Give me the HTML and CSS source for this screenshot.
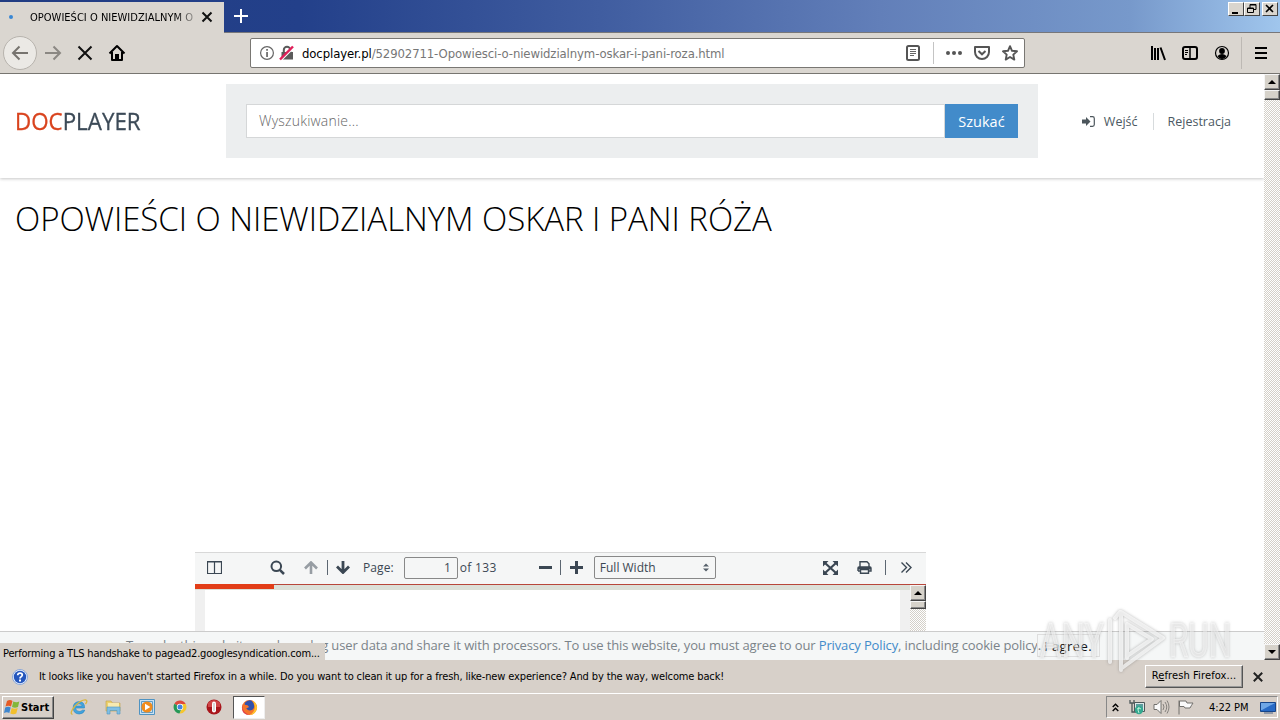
FILE: index.html
```
<!DOCTYPE html>
<html lang="pl">
<head>
<meta charset="utf-8">
<title>OPOWIEŚCI O NIEWIDZIALNYM OSKAR I PANI RÓŻA</title>
<link rel="stylesheet" href="styles.css">
</head>
<body>
<div class="titlebar">
  <div class="tab">
    <span class="tab-dot"></span>
    <span class="tab-title">OPOWIEŚCI O NIEWIDZIALNYM O</span>
    <svg class="tab-close" width="12" height="12" viewBox="0 0 12 12"><path d="M1.5 1.5l9 9M10.5 1.5l-9 9" stroke="#111" stroke-width="2"/></svg>
  </div>
  <svg class="new-tab" width="14" height="14" viewBox="0 0 14 14"><path d="M7 0v14M0 7h14" stroke="#fff" stroke-width="2"/></svg>
  <div class="window-buttons">
    <span class="win-btn"><svg width="14" height="12" viewBox="0 0 14 12"><path d="M3 9h6v2H3z"/></svg></span>
    <span class="win-btn"><svg width="14" height="12" viewBox="0 0 14 12"><path d="M5 5V1.500h6V6.500H9M5 2h6M2.500 5h6v4.500h-6zM2.500 5.500h6" fill="none" stroke="#000"/></svg></span>
    <span class="win-btn win-close"><svg width="14" height="12" viewBox="0 0 14 12"><path d="M3 2l7 7M10 2L3 9" stroke="#000" stroke-width="1.600"/></svg></span>
  </div>
</div>
<div class="navbar">
  <span class="back"><svg width="18" height="16" viewBox="0 0 18 16"><path d="M17 8H2M8.500 1.500L2 8l6.500 6.500" fill="none" stroke="#77746f" stroke-width="2"/></svg></span>
  <svg class="forward" width="18" height="16" viewBox="0 0 18 16"><path d="M1 8h15M9.500 1.500L16 8l-6.500 6.500" fill="none" stroke="#8b8883" stroke-width="2"/></svg>
  <svg class="stop" width="16" height="16" viewBox="0 0 16 16"><path d="M1.500 1.500l13 13M14.500 1.500l-13 13" stroke="#111" stroke-width="2"/></svg>
  <svg class="home" width="18" height="18" viewBox="0 0 18 18"><path d="M1.500 9.500L9 2l7.500 7.500M4 8v8h10V8" fill="none" stroke="#000" stroke-width="2" stroke-linejoin="round"/><path d="M7 10h4v6H7z"/></svg>
  <div class="urlbar">
    <svg width="16" height="16" viewBox="0 0 16 16"><circle cx="8" cy="8" r="6.400" fill="none" stroke="#666" stroke-width="1.200"/><path d="M7.200 4h1.700v1.700H7.200zM7.200 7h1.700v5H7.200z" fill="#666"/></svg>
    <svg class="lock" width="16" height="16" viewBox="0 0 16 16"><path d="M4.800 8V5a3.200 3.200 0 0 1 6.400 0v3" fill="none" stroke="#5b5b5b" stroke-width="2"/><path d="M2.500 7h11.500v7.500H2.500z" fill="#5b5b5b"/><path d="M2 15.500L15 2.500" stroke="#fff" stroke-width="1.500"/><path d="M1 14.500L14 1.500" stroke="#e0205a" stroke-width="2.400"/></svg>
    <span class="url"><b>docplayer.pl</b>/52902711-Opowiesci-o-niewidzialnym-oskar-i-pani-roza.html</span>
    <svg class="reader" width="14" height="16" viewBox="0 0 14 16"><rect x="1" y="1" width="12" height="14" rx="1.500" fill="none" stroke="#555" stroke-width="2"/><path d="M4 4.500h6M4 6.500h6M4 8.500h6M4 10.500h4" stroke="#666"/></svg>
    <span class="url-separator"></span>
    <svg class="dots" width="18" height="6" viewBox="0 0 18 6" fill="#555"><circle cx="3" cy="3" r="2"/><circle cx="9" cy="3" r="2"/><circle cx="15" cy="3" r="2"/></svg>
    <svg class="pocket" width="16" height="14" viewBox="0 0 16 14"><path d="M1 1h14v5a7 7 0 0 1-14 0z" fill="none" stroke="#555" stroke-width="2" stroke-linejoin="round"/><path d="M4.500 5L8 8.300 11.500 5" fill="none" stroke="#555" stroke-width="2"/></svg>
    <svg class="star" width="16" height="16" viewBox="0 0 16 16"><path d="M8 1.200l2 4.600 5 .5-3.700 3.300 1 5L8 12l-4.300 2.600 1-5L1 6.300l5-.5z" fill="none" stroke="#555" stroke-width="1.900" stroke-linejoin="round"/></svg>
  </div>
  <svg class="library" width="16" height="16" viewBox="0 0 16 16"><path d="M2 1v14M5 3v12M8 3v12M10.500 2.500L15 15" stroke="#000" stroke-width="2" fill="none"/></svg>
  <svg class="sidebar-icon" width="16" height="14" viewBox="0 0 16 14"><rect x="1" y="1" width="14" height="12" rx="2" fill="none" stroke="#000" stroke-width="2"/><path d="M8 1v12" stroke="#000" stroke-width="1.500"/><path d="M3 4.500h3M3 6.500h3M3 8.500h2" stroke="#000"/></svg>
  <svg class="account" width="16" height="16" viewBox="0 0 16 16"><circle cx="8" cy="8" r="6.500" fill="none" stroke="#000" stroke-width="1.200"/><circle cx="8" cy="6" r="2.900"/><path d="M3.500 11q4.500-4 9 0-1.500 3-4.500 3t-4.500-3"/></svg>
  <span class="nav-separator"></span>
  <svg class="menu" width="12" height="12" viewBox="0 0 12 12"><path d="M0 1h12M0 6h12M0 11h12" stroke="#000" stroke-width="2"/></svg>
</div>
<div class="content">
  <div class="page">
    <header class="header">
      <div class="logo"><span class="logo-doc">DOC</span>PLAYER</div>
      <div class="search">
        <div class="search-input">Wyszukiwanie...</div>
        <div class="search-button">Szukać</div>
      </div>
      <nav class="account-links">
        <svg width="13" height="11" viewBox="0 0 13 11"><path d="M0 3.500h4V1l4.500 4.500L4 10V7.500H0z" fill="#4c565c"/><path d="M8 .7h2.500q1.800 0 1.800 1.800v6q0 1.800-1.800 1.800H8" fill="none" stroke="#4c565c" stroke-width="1.200"/></svg>
        <span class="login">Wejść</span>
        <span class="register">Rejestracja</span>
      </nav>
    </header>
    <h1 class="title">OPOWIEŚCI O NIEWIDZIALNYM OSKAR I PANI RÓŻA</h1>
    <div class="viewer">
      <div class="toolbar">
        <svg class="t-sidebar" width="15" height="13" viewBox="0 0 15 13"><path d="M.5.5h14v12H.5zM7.500 1v12M0 1h15" fill="none" stroke="#3b4753" stroke-width="1.200"/></svg>
        <svg class="t-search" width="15" height="15" viewBox="0 0 15 15"><circle cx="6.300" cy="6.300" r="4.800" fill="none" stroke="#3b4753" stroke-width="2"/><path d="M9.800 9.800l4.200 4.200" stroke="#3b4753" stroke-width="2.500"/></svg>
        <svg class="t-up" width="14" height="13" viewBox="0 0 14 13"><path d="M7 13V2M1 7.500L7 1.500l6 6" fill="none" stroke="#979da3" stroke-width="2.600"/></svg>
        <span class="t-line"></span>
        <svg class="t-down" width="14" height="13" viewBox="0 0 14 13"><path d="M7 0v11M1 5.500l6 6 6-6" fill="none" stroke="#3b4753" stroke-width="2.800"/></svg>
        <span class="t-label">Page:</span>
        <span class="page-number">1</span>
        <span class="t-total">of 133</span>
        <svg class="t-minus" width="13" height="3"><path d="M0 0h13v3H0z" fill="#3b4753"/></svg>
        <span class="t-line t-line-zoom"></span>
        <svg class="t-plus" width="13" height="13" viewBox="0 0 13 13"><path d="M6.500 0v13M0 6.500h13" stroke="#3b4753" stroke-width="3"/></svg>
        <span class="zoom-select"><span>Full Width</span><svg width="6" height="9" viewBox="0 0 6 9"><path d="M0 3.500L3 .5l3 3zM0 5.500l3 3 3-3z" fill="#56606a"/></svg></span>
        <svg class="t-full" width="15" height="14" viewBox="0 0 15 14"><path d="M2 2l11 10M13 2L2 12" stroke="#3b4753" stroke-width="2.200"/><path d="M0 0h5.500L0 5.500zM15 0H9.500L15 5.500zM0 14h5.500L0 8.500zM15 14H9.500L15 8.500z" fill="#3b4753"/></svg>
        <svg class="t-print" width="15" height="13" viewBox="0 0 15 13"><path d="M3 6V.7h7l2 2V6M1 10V7q0-1 1-1h11q1 0 1 1v3h-2M1 10h2M3.500 8.500h8v3.800h-8z" fill="none" stroke="#3b4753" stroke-width="1.400"/><path d="M1 6h13v2.500H1z" fill="#3b4753"/></svg>
        <span class="t-line t-line-print"></span>
        <svg class="t-more" width="11" height="11" viewBox="0 0 11 11"><path d="M.5.5l5 5-5 5M5 .5l5 5-5 5" fill="none" stroke="#3b4753" stroke-width="1.400"/></svg>
      </div>
      <div class="progress"><div class="progress-fill"></div></div>
      <div class="document">
        <div class="sheet"></div>
        <div class="scrollbar doc-scrollbar"><span class="scroll-box scroll-up"></span><span class="scroll-box scroll-thumb"></span></div>
      </div>
    </div>
    <div class="cookie-bar">
      <span class="cookie-text">To make this website work, we log user data and share it with processors. To use this website, you must agree to our <a class="policy">Privacy Policy</a>, including cookie policy.</span>
      <span class="agree">I agree.</span>
    </div>
    <div class="status">Performing a TLS handshake to pagead2.googlesyndication.com...</div>
  </div>
  <div class="scrollbar page-scrollbar"><span class="scroll-box scroll-up"></span><span class="scroll-box scroll-thumb"></span><span class="scroll-box scroll-down"></span></div>
</div>
<div class="notification">
  <svg class="help" width="16" height="16" viewBox="0 0 16 16"><circle cx="8" cy="8" r="7.500" fill="#e6efff" stroke="#8ba7d6"/><circle cx="8" cy="8" r="6.200" fill="#2456bd"/><path d="M5.700 6.300q.1-2.200 2.300-2.200 2.300 0 2.300 1.900 0 1-1.200 1.700Q8 8.300 8 9.500" fill="none" stroke="#fff" stroke-width="1.700"/><path d="M7 10.600h2v1.800H7z" fill="#fff"/></svg>
  <span class="note-text">It looks like you haven't started Firefox in a while. Do you want to clean it up for a fresh, like-new experience? And by the way, welcome back!</span>
  <span class="refresh">R<u>e</u>fresh Firefox...</span>
  <svg class="note-close" width="10" height="10" viewBox="0 0 10 10"><path d="M.8.8l8.400 8.400M9.200.8L.8 9.200" stroke="#222" stroke-width="2"/></svg>
</div>
<div class="taskbar">
  <div class="start"><svg width="17" height="16" viewBox="0 0 17 16"><path d="M3 2q3-2 5.500 0L7 7.500Q4.500 6 1.500 7.500z" fill="#e65b25"/><path d="M9.300 2.500q3 1.600 6 0L14 8q-3 1.600-6 0z" fill="#83b738"/><path d="M1.200 8.500q3-1.500 5.500 0L5.300 14Q3 12.500 0 14z" fill="#3f86ce"/><path d="M7.700 9q3 1.600 6 0L12.300 14.500q-3 1.500-6 0z" fill="#f2bf2c"/></svg>Start</div>
  <div class="quick">
    <svg width="18" height="18" viewBox="0 0 18 18"><path d="M14.500 10H5.500q.5 3.500 3.800 3.500 2 0 3-1.300h2.500Q13.500 16 9.200 16q-6-.3-6-6.200T9.300 3.600q5.500.2 5.200 6.400M5.700 8h6.500Q11.700 5.800 9 5.800T5.700 8" fill="#41a4de" stroke="#2183c3" stroke-width=".6"/><path d="M2.500 16.500Q-1 15.500 5 8q7-7 11-6 2 .8-.5 4" fill="none" stroke="#d9b63f" stroke-width="1.300"/></svg>
    <svg width="18" height="18" viewBox="0 0 18 18"><path d="M2 3h5l1.500 2H16v8H2z" fill="#ecd06d" stroke="#c4a348" stroke-width=".6"/><path d="M4 5h11v4H4z" fill="#f7eab0"/><path d="M3 9h13v7h-3v-3.500H6V16H3z" fill="#80bfe4" stroke="#4d94bf" stroke-width=".6"/></svg>
    <svg width="18" height="18" viewBox="0 0 18 18"><path d="M1.500 1.500h15v15h-15z" fill="#c9e1f3" stroke="#4f93c2"/><path d="M3.500 3.500h11v11h-11z" fill="none" stroke="#5e9cc7"/><circle cx="9" cy="9" r="5.600" fill="#f18c1d"/><path d="M7 5.800L12.300 9 7 12.200z" fill="#fff"/></svg>
    <svg width="18" height="18" viewBox="0 0 18 18"><path d="M9 9L3.400 5.800A6.500 6.500 0 0 1 14.700 6z" fill="#df493c"/><path d="M3.400 5.800A6.500 6.500 0 0 0 8.500 15.500L10.500 11 9 9z" fill="#269857"/><path d="M14.700 6A6.500 6.500 0 0 1 8.500 15.500L11.500 10 9 6z" fill="#f5c62c"/><circle cx="9" cy="9" r="3.200" fill="#fff"/><circle cx="9" cy="9" r="2.500" fill="#4284df"/></svg>
    <svg width="18" height="18" viewBox="0 0 18 18"><circle cx="9" cy="9" r="7.500" fill="#a9151b"/><path d="M3 5q6-6 12 0v4H3z" fill="#cf4546"/><rect x="7" y="3.500" width="4" height="11" rx="2" fill="#fff"/><path d="M8.500 5h1v8h-1z" fill="#b6b0b0"/></svg>
  </div>
  <div class="task-active"><svg width="17" height="17" viewBox="0 0 18 18"><circle cx="9" cy="9" r="8" fill="#f4742b"/><path d="M12 1.500q5 3 5 7.500a8 8 0 0 1-8 8q5-3 5.500-7T12 1.500" fill="#ffc52e"/><path d="M1.500 5Q.5 14 9 17 1 17 1 9z" fill="#df3e48"/><path d="M4 4q3-3.500 7-2.500 3 2.500 3 6T10.500 12q-3 .5-5-2l3-1.500-1.500-2-3-.5z" fill="#3051ac"/></svg></div>
  <div class="tray">
    <svg class="chevrons" width="7" height="9" viewBox="0 0 7 9"><path d="M.7 4L3.500 1.200 6.300 4M.7 8l2.800-2.800L6.300 8" fill="none" stroke="#000" stroke-width="1.400"/></svg>
    <svg class="net" width="17" height="16" viewBox="0 0 17 16"><path d="M5.500 3.500h10v9h-10z" fill="#dce8e8" stroke="#4d5759"/><path d="M7 5h7v6H7z" fill="#5b9c9d"/><path d="M1 1v3h4V1M3 4v9h5" fill="none" stroke="#4d5759" stroke-width="1.300"/><circle cx="10" cy="11" r="4.200" fill="#35a990"/><path d="M8 10q2-2 4 0M10 8q-2 3 0 6" fill="none" stroke="#b9eed8"/></svg>
    <svg class="sound" width="17" height="16" viewBox="0 0 17 16"><path d="M1 5.500h3l4-4v13l-4-4H1z" fill="#fafafa" stroke="#72706d"/><path d="M10 5q2 3 0 6M12 3q3.500 5 0 10M14 1.500q4 6.500 0 13" fill="none" stroke="#85827e"/></svg>
    <svg class="flag" width="17" height="16" viewBox="0 0 17 16"><path d="M2 1.500v14M2.500 2H9l1 2h6q-2 3-3 5H8L7 7.500H2.500z" fill="#fafafa" stroke="#72706d"/></svg>
    <span class="clock">4:22 PM</span>
    <svg class="desktop" width="16" height="13" viewBox="0 0 16 13"><path d="M.5 1.500h15v9H.5z" fill="#286ac5" stroke="#174589"/><path d="M1 2h14L2 9H1z" fill="#6fa7e6"/><path d="M4 12h9" stroke="#4a6387"/></svg>
  </div>
</div>
<svg class="watermark" width="200" height="70" viewBox="0 0 200 70">
  <g class="mark">
    <text x="4" y="51" textLength="64" lengthAdjust="spacingAndGlyphs">ANY</text>
    <text x="133" y="51" textLength="62" lengthAdjust="spacingAndGlyphs">RUN</text>
    <path d="M74 14v42M85 64V6l42 26-41 30M79 12l5-6M91 52V18l25 15-25 17"/>
  </g>
</svg>
</body>
</html>
```
FILE: styles.css
```
* { box-sizing: border-box; }
body { margin: 0; width: 1280px; height: 720px; overflow: hidden; display: flex; flex-direction: column; position: relative; background: #fff; font-family: "DejaVu Sans Condensed", "DejaVu Sans", sans-serif; font-stretch: condensed; font-size: 11px; color: #000; white-space: nowrap; }
svg { display: block; flex: none; }

.titlebar { height: 33px; flex: none; display: flex; background: linear-gradient(90deg, #213c82 0, #23408a 300px, #405da0 600px, #627fb9 880px, #7799cb 1130px, #a0c6ed 1280px); border-bottom: 1px solid #77777a; }
.tab { width: 224px; height: 31px; margin-top: 2px; background: #dad6d0; display: flex; align-items: center; padding-bottom: 1px; }
.tab-dot { width: 4px; height: 4px; margin-left: 9px; border-radius: 50%; background: #3987d4; }
.tab-title { width: 166px; margin-left: 17px; letter-spacing: .02px; -webkit-mask-image: linear-gradient(90deg, #000 145px, transparent 172px); mask-image: linear-gradient(90deg, #000 145px, transparent 172px); }
.tab-close { margin-left: 5px; }
.new-tab { margin: 9px 0 0 10px; }
.window-buttons { display: flex; margin: 2px 2px 0 auto; }
.win-btn { width: 16px; height: 14px; background: #d9d5ce; border: 1px solid; border-color: #fff #444 #444 #fff; }
.win-close { margin-left: 2px; }

.navbar { height: 41px; flex: none; display: flex; align-items: center; background: #dad6d0; border-bottom: 1px solid #777570; padding: 0 13px 0 3px; }
.back { width: 34px; height: 34px; border: 1px solid #b7b3ad; border-radius: 50%; background: #ebe9e5; display: grid; place-items: center; }
.forward { margin-left: 7px; }
.stop { margin-left: 15px; }
.home { margin-left: 15px; }
.urlbar { width: 775px; height: 30px; margin-left: 124px; background: #fff; border: 1px solid #797773; border-radius: 2px; display: flex; align-items: center; padding: 0 6px 0 8px; }
.lock { margin-left: 4px; }
.url { margin-left: 7px; color: #777; font-size: 13px; letter-spacing: -.11px; }
.url b { font-weight: 400; color: #000; }
.reader { margin-left: auto; }
.url-separator { width: 1px; height: 22px; background: #c4c4c4; margin-left: 13px; }
.dots { margin-left: 11px; }
.pocket { margin-left: 11px; }
.star { margin-left: 12px; }
.library { margin-left: auto; }
.sidebar-icon { margin-left: 16px; }
.account { margin-left: 16px; }
.nav-separator { width: 1px; height: 32px; background: #bdb9b4; margin-left: 11px; }
.menu { margin-left: 13px; }

.content { height: 586px; flex: none; display: flex; }
.page { width: 1264px; height: 586px; position: relative; overflow: hidden; display: flex; flex-direction: column; font-family: "Open Sans", sans-serif; font-stretch: normal; }
.header { height: 104px; flex: none; display: flex; align-items: flex-start; padding: 10px 33px 0 15px; box-shadow: 0 1px 3px rgba(0,0,0,.22); }
.logo { width: 211px; flex: none; padding-top: 21px; font: 24.5px/32px "Open Sans", sans-serif; color: #3c4a57; transform: scaleX(.912); transform-origin: 0 50%; -webkit-text-stroke: .3px; }
.logo-doc { color: #d9431e; }
.search { width: 812px; height: 74px; background: #eceeef; padding: 20px; display: flex; }
.search-input { width: 699px; height: 34px; background: #fff; border: 1px solid #d5d7d8; padding-left: 12px; font-size: 14px; line-height: 32px; font-weight: 300; letter-spacing: .2px; color: #666; }
.search-button { width: 73px; height: 34px; background: #428bca; color: #fff; text-align: center; font-size: 14.500px; line-height: 35px; }
.account-links { height: 74px; margin-left: auto; display: flex; align-items: center; color: #4c5963; font-size: 12.5px; }
.login { margin-left: 9px; padding-right: 15px; border-right: 1px solid #d7dbdd; }
.register { margin-left: 14px; }
.title { margin: 18px 0 0 15px; height: 46px; font-size: 33px; line-height: 46px; font-weight: 300; letter-spacing: -.06px; }
.viewer { width: 731px; margin: 310px 0 0 195px; flex: none; }
.toolbar { height: 32px; display: flex; align-items: center; background: #f5f6f6; border-top: 1px solid #d8d8d8; padding: 0 14px 2px 12px; color: #3b4753; font-size: 12px; }
.t-search { margin-left: 48px; }
.t-up { margin-left: 19px; }
.t-line { width: 1px; height: 15px; background: #5c6671; margin-left: 9px; }
.t-down { margin-left: 8px; }
.t-label { margin-left: 13px; letter-spacing: .1px; }
.page-number { width: 54px; height: 22px; margin-left: 10px; border: 1px solid #888; border-radius: 2px; text-align: right; padding-right: 6px; line-height: 20px; }
.t-total { width: 36px; margin-left: 2px; letter-spacing: .3px; }
.t-minus { margin-left: 43px; }
.t-line-zoom { margin-left: 8px; }
.t-plus { margin-left: 9px; }
.zoom-select { width: 122px; height: 23px; margin-left: 11px; border: 1px solid #888; border-radius: 2px; display: flex; align-items: center; justify-content: space-between; padding: 0 6px 0 5px; }
.t-full { margin-left: auto; }
.t-print { margin-left: 19px; }
.t-line-print { margin-left: 13px; }
.t-more { margin-left: 15px; }
.progress { height: 6px; background: #dce0d8; border-top: 1px solid #b8473b; }
.progress-fill { width: 79px; height: 5px; margin-top: -1px; background: #e23d17; }
.document { height: 71px; background: #f0f0f0; display: flex; justify-content: space-between; padding-left: 10px; }
.sheet { width: 695px; background: #fff; }
.scrollbar { width: 16px; flex: none; display: flex; flex-direction: column; background: repeating-conic-gradient(#d4d0c8 0 25%, #fff 0 50%) 0 0 / 2px 2px; }
.doc-scrollbar { margin-top: -5px; }
.scroll-box { width: 16px; height: 16px; background: #d6d2ca; border: 1px solid; border-color: #f5f5f5 #444 #444 #f5f5f5; box-shadow: inset -1px -1px #888; display: grid; place-items: center; }
.scroll-up::before, .scroll-down::before { content: ""; border: 4px solid transparent; border-top: 0; border-bottom-color: #000; }
.scroll-down::before { border-top: 4px solid #000; border-bottom: 0; }
.scroll-thumb { height: 10px; }
.doc-scrollbar .scroll-thumb { height: 8px; }
.page-scrollbar .scroll-down { margin-top: auto; }

.cookie-bar { position: absolute; left: 0; bottom: 0; width: 1264px; height: 29px; background: #f5f7f7; border-top: 1px solid #ccc; display: flex; align-items: center; padding: 0 0 2px 126px; font-size: 13px; color: #7b8389; }
.cookie-text { width: 911px; letter-spacing: -.13px; }
.policy { color: #428bca; }
.agree { width: 63px; height: 23px; border: 1px solid #dedede; color: #111; padding-left: 6px; line-height: 23px; letter-spacing: .45px; }
.status { position: absolute; left: 0; bottom: -1px; width: 325px; height: 18px; background: #d7d1ca; color: #000; font: 11px/17px "DejaVu Sans Condensed", sans-serif; padding: 2px 0 0 3px; letter-spacing: -.18px; }

.notification { height: 33px; flex: none; background: #d7d0c9; display: flex; align-items: center; padding: 0 17px 0 12px; }
.note-text { margin-left: 11px; letter-spacing: -.138px; }
.refresh { width: 98px; height: 23px; margin-left: auto; border: 1px solid; border-color: #fff #555 #555 #fff; box-shadow: inset -1px -1px #999; text-align: center; line-height: 20px; letter-spacing: .12px; }
.note-close { margin-left: 10px; }
.taskbar { height: 27px; flex: none; background: #d6cec7; border-top: 1px solid #fff; display: flex; align-items: center; padding: 0 2px; }
.start { width: 52px; height: 23px; border: 1px solid; border-color: #fff #444 #444 #fff; box-shadow: inset -1px -1px #888; display: flex; align-items: center; font-weight: 700; padding-left: 1px; }
.quick { display: flex; gap: 15.800px; margin-left: 16px; }
.task-active { width: 32px; height: 23px; background: #fff; border: 1px solid; border-color: #555 #eee #eee #555; margin-left: 10px; display: grid; place-items: center; }
.tray { width: 172px; height: 22px; margin-left: auto; border: 1px solid; border-color: #888 #fff #fff #888; display: flex; align-items: center; padding-left: 5px; }
.net { margin-left: 10px; }
.sound { margin-left: 7px; }
.flag { margin-left: 7px; }
.clock { width: 40px; margin-left: 15px; letter-spacing: -.05px; }
.desktop { margin-left: 11px; }
.watermark { position: absolute; left: 1036px; top: 606px; font: 49px "Roboto", sans-serif; }
.mark { fill: rgba(255,255,255,.5); stroke: rgba(255,255,255,.4); stroke-width: .8; filter: drop-shadow(0 0 1.5px rgba(90,90,90,.6)); }
.mark path { fill: none; stroke: rgba(255,255,255,.7); stroke-width: 4; stroke-linejoin: round; stroke-linecap: round; }
```
